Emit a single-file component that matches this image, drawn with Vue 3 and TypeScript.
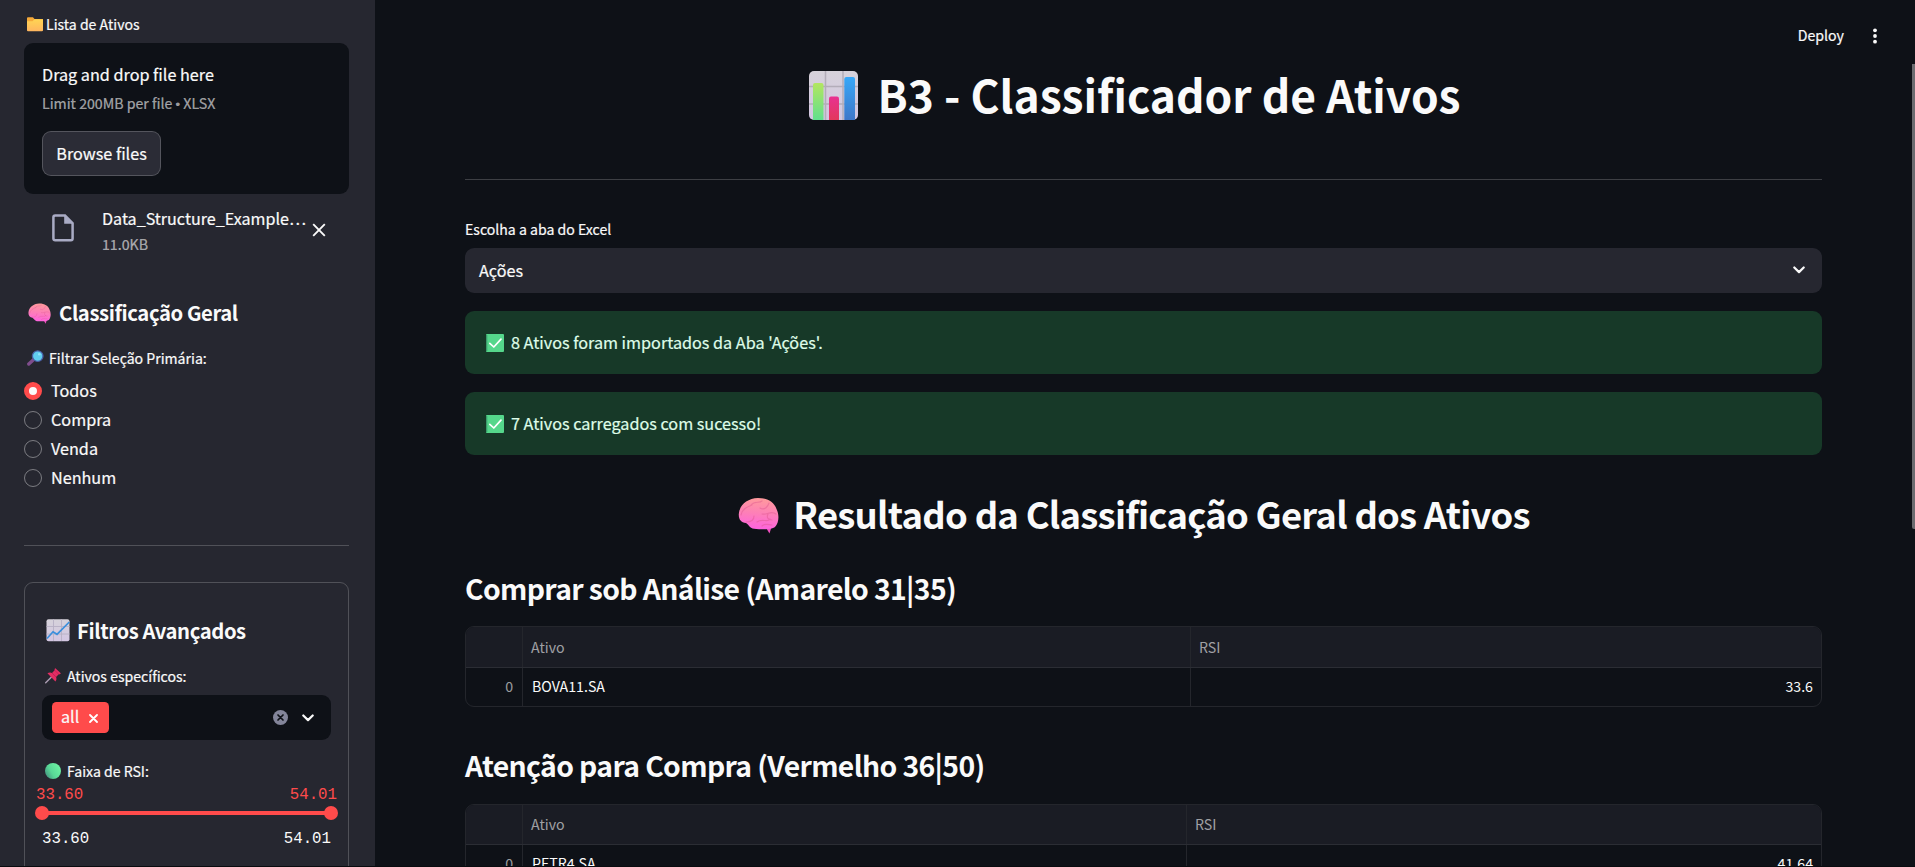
<script setup lang="ts">
import { ref } from 'vue'

interface ResultTable {
  title: string
  split: string
  rows: { index: number; ativo: string; rsi: string }[]
}

const options = ['Todos', 'Compra', 'Venda', 'Nenhum']
const selected = ref('Todos')

const alerts = ["8 Ativos foram importados da Aba 'Ações'.", '7 Ativos carregados com sucesso!']

const tables: ResultTable[] = [
  {
    title: 'Comprar sob Análise (Amarelo 31|35)',
    split: '668px',
    rows: [{ index: 0, ativo: 'BOVA11.SA', rsi: '33.6' }],
  },
  {
    title: 'Atenção para Compra (Vermelho 36|50)',
    split: '664px',
    rows: [{ index: 0, ativo: 'PETR4.SA', rsi: '41.64' }],
  },
]
</script>

<template>
  <div class="app">
    <svg class="defs" width="0" height="0" aria-hidden="true">
      <defs>
        <linearGradient id="brainFill" x1="0.5" y1="0" x2="0.4" y2="1">
          <stop offset="0" stop-color="#ff9a9c" />
          <stop offset="0.5" stop-color="#fd7fb8" />
          <stop offset="1" stop-color="#ff62e0" />
        </linearGradient>
        <linearGradient id="paperFill" x1="0" y1="0" x2="0" y2="1">
          <stop offset="0" stop-color="#d6d2da" />
          <stop offset="1" stop-color="#d3c6e2" />
        </linearGradient>
        <linearGradient id="barGreen" x1="0" y1="0" x2="0" y2="1">
          <stop offset="0" stop-color="#b3e660" />
          <stop offset="1" stop-color="#61df8d" />
        </linearGradient>
        <linearGradient id="barRed" x1="0" y1="0" x2="0" y2="1">
          <stop offset="0" stop-color="#e83191" />
          <stop offset="1" stop-color="#e2385c" />
        </linearGradient>
        <linearGradient id="barBlue" x1="0" y1="0" x2="0" y2="1">
          <stop offset="0" stop-color="#37a8f8" />
          <stop offset="1" stop-color="#3f77c9" />
        </linearGradient>
        <linearGradient id="folderFill" x1="0" y1="0" x2="0" y2="1">
          <stop offset="0" stop-color="#ffd553" />
          <stop offset="1" stop-color="#ffb65f" />
        </linearGradient>
        <linearGradient id="ballFill" x1="1" y1="0.2" x2="0" y2="0.8">
          <stop offset="0" stop-color="#6ff5a4" />
          <stop offset="0.6" stop-color="#58d796" />
          <stop offset="1" stop-color="#43907e" />
        </linearGradient>
        <symbol id="brain" viewBox="0 0 41 37">
          <path d="M27.500 30 L31.500 36.500 L33.500 30z" fill="#f04fc0" />
          <path
            d="M8 26C3 26 .5 22 .8 17C1.500 8 9 1.500 20 1C30 1 36 5 38.500 12C41.500 18 41 26 37 30C34 33 18 32.500 14.500 31.500C11.500 30.500 11 28 8 26z"
            fill="url(#brainFill)"
          />
          <g fill="none" stroke="#de568f" stroke-opacity=".45" stroke-width="1.2" stroke-linecap="round">
            <path d="M3 18C4 12 9 10 14 8M8 25C13 25 16 23 16 19M13 8C17 3 21 7 24 4" />
            <path d="M22 11C27 14 30 9 31 6M24 17C30 18 33 13 38 17M19 25C24 21 30 26 32 22M30 17C28 21 31 23 34 23M24 29C27 26 31 28 34 28" />
          </g>
        </symbol>
        <symbol id="check" viewBox="0 0 18 18">
          <rect width="18" height="18" rx="1" fill="#55d78b" />
          <path d="M0 1v16h1.300V1z" fill="#3b9c6c" />
          <path d="M3.800 9.300l4 3.700 7.200-7.900" fill="none" stroke="#fff" stroke-width="1.700" stroke-linecap="round" stroke-linejoin="round" />
        </symbol>
        <symbol id="chevron" viewBox="0 0 12 8">
          <path d="M1.300 1.500L6 6.100 10.700 1.500" fill="none" stroke="#fafafa" stroke-width="2.200" stroke-linecap="round" stroke-linejoin="round" />
        </symbol>
      </defs>
    </svg>

    <aside class="sidebar">
      <div class="label upload-label">
        <svg width="16" height="15" viewBox="0 0 16 15">
          <path d="M0 1.200Q0 .3 1 .3H6l1.500 1.700H16V6H0z" fill="#f5a93a" />
          <path d="M0 4.200H5.500L7.500 2.200H15.200Q16 2.200 16 3V13.200Q16 14.200 15 14.200H1Q0 14.200 0 13.200z" fill="url(#folderFill)" />
        </svg>
        <span>Lista de Ativos</span>
      </div>

      <section class="uploader">
        <div class="drop-title">Drag and drop file here</div>
        <div class="drop-limit">Limit 200MB per file <span class="bullet">•</span> XLSX</div>
        <button class="browse">Browse files</button>
      </section>

      <div class="file">
        <svg class="file-icon" width="22" height="28" viewBox="0 0 22 28">
          <path d="M3.200 1.500H13L20.600 9.200V24.500Q20.600 26.200 19 26.200H3.200Q1.400 26.200 1.400 24.500V3.200Q1.400 1.500 3.200 1.500z" fill="none" stroke="#a9abc4" stroke-width="2.500" />
          <path d="M12.200 1V9.800H21z" fill="#a9abc4" />
        </svg>
        <div class="file-meta">
          <div class="file-name">Data_Structure_Example…</div>
          <div class="file-size">11.0KB</div>
        </div>
        <svg class="file-x" width="14" height="14" viewBox="0 0 14 14">
          <path d="M1.200 1.200L12.800 12.800M12.800 1.200L1.200 12.800" stroke="#fafafa" stroke-width="1.900" />
        </svg>
      </div>

      <h3 class="side-title general">
        <svg width="23" height="21" viewBox="0 0 41 37" preserveAspectRatio="none"><use href="#brain" width="41" height="37" /></svg>
        <span>Classificação Geral</span>
      </h3>

      <div class="label filter-label">
        <svg width="17" height="16" viewBox="0 0 17 16">
          <path d="M1.800 14L7 9.300" stroke="#7f4d8c" stroke-width="3.400" stroke-linecap="round" />
          <circle cx="10.700" cy="6.100" r="5.300" fill="#60cdf0" stroke="#4a5fa6" stroke-width="1.300" />
          <circle cx="12.300" cy="4.300" r="1.300" fill="#8fe4fb" />
        </svg>
        <span>Filtrar Seleção Primária:</span>
      </div>

      <div class="radios">
        <label v-for="o in options" :key="o" class="radio" @click="selected = o">
          <span class="dot" :class="{ on: selected === o }"></span>
          <span class="radio-text">{{ o }}</span>
        </label>
      </div>

      <div class="side-rule"></div>

      <section class="panel">
        <h3 class="side-title">
          <svg width="24" height="23" viewBox="0 0 24 23">
            <rect x=".5" y=".3" width="23" height="22" rx="2" fill="url(#paperFill)" />
            <path d="M7.500 0V22M15.500 0V22M.5 7.500H23.500M.5 15H23.500" stroke="#b7b0c4" stroke-width=".9" />
            <path d="M1 19.500L7 12.800 11 15.300 23.300 3" fill="none" stroke="#3a8fdc" stroke-width="1.700" />
          </svg>
          <span>Filtros Avançados</span>
        </h3>

        <div class="label pin-label">
          <svg width="16" height="16" viewBox="0 0 16 16">
            <path d="M.7 14.700L6.500 9" stroke="#a99bb0" stroke-width="1.500" stroke-linecap="round" />
            <path d="M2.400 5.300C4.200 4.200 6 4.500 7 5L9.700 2.200C9.400 1.200 9.700 .5 10.400 .2L15.800 5.300C15.500 6.300 14.500 6.500 13.700 6.300L11.100 9C11.700 10.500 11.500 12.400 10.400 13.600z" fill="#e32d62" />
            <path d="M7 5L11.100 9M9.700 2.200L13.700 6.300" stroke="#b8205a" stroke-width=".8" />
          </svg>
          <span>Ativos específicos:</span>
        </div>

        <div class="multi">
          <span class="tag">
            <span class="tag-text">all</span>
            <svg width="9" height="9" viewBox="0 0 9 9"><path d="M1 1L8 8M8 1L1 8" stroke="#fff" stroke-width="1.800" stroke-linecap="round" /></svg>
          </span>
          <svg class="clear" width="15" height="15" viewBox="0 0 15 15">
            <circle cx="7.500" cy="7.500" r="7.500" fill="#83859a" />
            <path d="M5 5L10 10M10 5L5 10" stroke="#0e1117" stroke-width="1.700" stroke-linecap="round" />
          </svg>
          <svg width="12" height="8"><use href="#chevron" width="12" height="8" /></svg>
        </div>

        <div class="label rsi-label">
          <svg width="16" height="16" viewBox="0 0 16 16"><circle cx="8" cy="8" r="8" fill="url(#ballFill)" /></svg>
          <span>Faixa de RSI:</span>
        </div>
        <div class="mono current"><span>33.60</span><span>54.01</span></div>
        <div class="slider">
          <span class="thumb"></span>
          <span class="track"></span>
          <span class="thumb"></span>
        </div>
        <div class="mono limits"><span>33.60</span><span>54.01</span></div>
      </section>
    </aside>

    <main class="main">
      <header class="toolbar">
        <span class="deploy">Deploy</span>
        <svg width="4" height="16" viewBox="0 0 4 16" fill="#fafafa">
          <circle cx="2" cy="2.300" r="1.900" />
          <circle cx="2" cy="8" r="1.900" />
          <circle cx="2" cy="13.700" r="1.900" />
        </svg>
      </header>

      <h1 class="title">
        <svg width="49" height="49" viewBox="0 0 49 49">
          <rect width="49" height="49" rx="5" fill="url(#paperFill)" />
          <path d="M16.500 0V49M34 0V49M0 15.500H49M0 33H49" stroke="#b3adb9" stroke-width="1.500" />
          <path d="M4 49V14Q4 12 6 12H12.500Q14.500 12 14.500 14V49z" fill="url(#barGreen)" />
          <path d="M20 49V27.500Q20 25.500 22 25.500H28Q30 25.500 30 27.500V49z" fill="url(#barRed)" />
          <path d="M35.300 49V8Q35.300 6 37.300 6H44Q46 6 46 8V49z" fill="url(#barBlue)" />
        </svg>
        <span>B3 - Classificador de Ativos</span>
      </h1>

      <div class="main-rule"></div>

      <div class="label sheet-label">Escolha a aba do Excel</div>
      <div class="select">
        <span>Ações</span>
        <svg width="12" height="8"><use href="#chevron" width="12" height="8" /></svg>
      </div>

      <div v-for="a in alerts" :key="a" class="alert">
        <svg width="18" height="18"><use href="#check" width="18" height="18" /></svg>
        <span>{{ a }}</span>
      </div>

      <h2 class="subtitle">
        <svg width="41" height="37"><use href="#brain" width="41" height="37" /></svg>
        <span>Resultado da Classificação Geral dos Ativos</span>
      </h2>

      <section v-for="t in tables" :key="t.title" class="result">
        <h3 class="result-title">{{ t.title }}</h3>
        <div class="table" :style="{ '--split': t.split }">
          <div class="row head">
            <span></span>
            <span>Ativo</span>
            <span>RSI</span>
          </div>
          <div v-for="r in t.rows" :key="r.index" class="row">
            <span class="idx">{{ r.index }}</span>
            <span class="name">{{ r.ativo }}</span>
            <span class="num">{{ r.rsi }}</span>
          </div>
        </div>
      </section>

      <div class="scrollbar"></div>
    </main>
  </div>
</template>

<style>
html,
body {
  background: #0e1117;
  overflow: hidden;
}
</style>

<style scoped>
.app {
  display: flex;
  box-sizing: border-box;
  width: 100%;
  height: 867px;
  overflow: hidden;
  background: #0e1117;
  border-bottom: 1px solid #090b0f;
  color: #fafafa;
  font-family: 'Noto Sans CJK SC', 'Noto Sans', sans-serif;
  font-size: 16.2px;
  -webkit-text-stroke: 0.2px currentColor;
}
.app * {
  box-sizing: border-box;
}
svg {
  display: block;
  flex: none;
}
.defs {
  position: absolute;
}
h1,
h2,
h3 {
  margin: 0;
  font-weight: 700;
  white-space: nowrap;
  -webkit-text-stroke: 0;
}
.label {
  display: flex;
  align-items: center;
  height: 22px;
  line-height: 22px;
  font-size: 14.1px;
  white-space: nowrap;
}

/* Sidebar */
.sidebar {
  flex: none;
  width: 375px;
  padding: 13px 26px 0 24px;
  background: #262730;
}
.upload-label {
  gap: 3px;
  padding-left: 3px;
  margin-bottom: 8px;
}
.uploader {
  height: 151px;
  padding: 18px;
  border-radius: 9px;
  background: #0e1117;
}
.drop-title {
  line-height: 26px;
}
.drop-limit {
  height: 22px;
  margin-top: 5px;
  font-size: 14.18px;
  line-height: 22px;
  color: rgba(250, 250, 250, 0.6);
}
.bullet {
  font-family: 'Liberation Sans', sans-serif;
  font-size: 13px;
  line-height: 1;
}
.browse {
  display: block;
  width: 119px;
  height: 45px;
  margin-top: 17px;
  padding: 0 0 1px;
  border: 1px solid rgba(250, 250, 250, 0.2);
  border-radius: 9px;
  background: #2b2c36;
  color: inherit;
  font: inherit;
  -webkit-text-stroke: inherit;
}
.file {
  display: flex;
  height: 61px;
  padding: 11px 0 0 28px;
}
.file-icon {
  margin-top: 9px;
}
.file-meta {
  margin-left: 28px;
  width: 205px;
}
.file-name {
  line-height: 26px;
  font-size: 16.1px;
  white-space: nowrap;
}
.file-size {
  margin-top: 2px;
  font-size: 14.18px;
  line-height: 22px;
  color: rgba(250, 250, 250, 0.6);
}
.file-x {
  margin: 18px 0 0 5px;
}
.side-title {
  display: flex;
  align-items: center;
  height: 30px;
  gap: 8px;
  font-size: 20.25px;
  line-height: 30px;
  letter-spacing: -0.4px;
}
.side-title span {
  margin-top: 2px;
}
.general {
  margin-top: 42px;
  padding-left: 4px;
}
.general svg {
  margin-top: 2px;
}
.filter-label {
  margin-top: 20px;
  padding-left: 3px;
  gap: 5px;
}
.radios {
  margin-top: 7px;
}
.radio {
  display: flex;
  height: 29px;
}
.dot {
  width: 18px;
  height: 18px;
  margin: 6px 9px 0 0;
  border: 1px solid rgba(250, 250, 250, 0.4);
  border-radius: 50%;
}
.dot.on {
  border: 5.5px solid #ff4b4b;
  background: #fafafa;
}
.radio-text {
  line-height: 29px;
}
.side-rule {
  height: 1px;
  margin-top: 53px;
  background: rgba(250, 250, 250, 0.2);
}
.panel {
  height: 400px;
  margin-top: 36px;
  padding: 32px 17px 0;
  border: 1px solid rgba(250, 250, 250, 0.2);
  border-radius: 9px;
}
.panel .side-title {
  padding-left: 4px;
  gap: 7px;
}
.pin-label {
  margin-top: 20px;
  padding-left: 3px;
  gap: 6px;
}
.multi {
  display: flex;
  align-items: center;
  height: 45px;
  margin-top: 8px;
  padding: 0 17px 0 10px;
  border-radius: 9px;
  background: #0e1117;
}
.tag {
  display: flex;
  align-items: center;
  justify-content: space-between;
  width: 57px;
  height: 31px;
  padding: 0 11px 0 9px;
  border-radius: 4.5px;
  background: #ff4b4b;
  line-height: 28px;
}
.tag-text {
  height: 31px;
}
.tag svg {
  margin-top: 1px;
}
.clear {
  margin: 0 14px 0 auto;
}
.rsi-label {
  margin-top: 20px;
  padding-left: 3px;
  gap: 6px;
}
.mono {
  display: flex;
  justify-content: space-between;
  height: 16px;
  font-family: 'Liberation Mono', monospace;
  font-size: 15.75px;
  line-height: 16px;
  -webkit-text-stroke: 0;
}
.current {
  margin: 5px -6px 0;
  color: #ff4b4b;
}
.slider {
  display: flex;
  align-items: center;
  height: 20px;
  margin: 0 -7px;
}
.thumb {
  width: 14px;
  height: 14px;
  border-radius: 50%;
  background: #ff4b4b;
}
.track {
  flex: 1;
  height: 4px;
  margin: 0 -1px;
  background: #ff4b4b;
}
.limits {
  margin-top: 8px;
}

/* Main area */
.main {
  position: relative;
  flex: 1;
  min-width: 0;
  padding: 63px 93px 0 90px;
}
.toolbar {
  position: absolute;
  top: 25px;
  right: 38px;
  display: flex;
  align-items: center;
  gap: 29px;
  height: 22px;
  font-size: 14.18px;
  line-height: 20px;
}
.deploy {
  margin-top: -2px;
}
.title {
  display: flex;
  align-items: center;
  justify-content: center;
  height: 60px;
  gap: 19px;
  padding-right: 17px;
  font-size: 44.35px;
  line-height: 60px;
}
.title svg {
  margin-top: 5px;
}
.title span {
  margin-top: 2px;
}
.main-rule {
  height: 1px;
  margin-top: 56px;
  background: rgba(250, 250, 250, 0.2);
}
.sheet-label {
  margin-top: 38px;
}
.select {
  display: flex;
  align-items: center;
  justify-content: space-between;
  height: 45px;
  margin-top: 8px;
  padding: 0 17px 1px 14px;
  border-radius: 9px;
  background: #262730;
  line-height: 26px;
}
.select span {
  margin-top: -1px;
}
.alert {
  display: flex;
  align-items: center;
  gap: 7px;
  height: 63px;
  margin-top: 18px;
  padding-left: 21px;
  border-radius: 9px;
  background: #173928;
  color: #dffde9;
  line-height: 61px;
}
.subtitle {
  display: flex;
  align-items: center;
  justify-content: center;
  height: 50px;
  margin-top: 33px;
  gap: 14px;
  padding-right: 19px;
  font-size: 36.45px;
  line-height: 50px;
  letter-spacing: -0.75px;
}
.subtitle svg {
  margin-top: 4px;
}
.result {
  margin-top: 30px;
}
.result + .result {
  margin-top: 38px;
}
.result-title {
  height: 40px;
  font-size: 28.35px;
  line-height: 40px;
  letter-spacing: -0.64px;
}
.table {
  margin-top: 18px;
  border: 1px solid #24262c;
  border-radius: 9px;
  overflow: hidden;
  font-size: 14.18px;
  -webkit-text-stroke: 0;
}
.row {
  display: grid;
  grid-template-columns: 56px var(--split) 1fr;
  height: 38px;
  line-height: 36px;
}
.row > span {
  padding: 0 8px;
}
.row > span + span {
  border-left: 1px solid #24262c;
}
.row.head {
  height: 41px;
  line-height: 40px;
  background: #1a1c24;
  border-bottom: 1px solid #2b2d34;
  color: rgba(250, 250, 250, 0.6);
}
.result + .result .table {
  margin-top: 19px;
}
.result + .result .head {
  height: 40px;
  line-height: 38px;
}
.row .idx {
  padding-right: 9px;
  text-align: right;
  color: rgba(250, 250, 250, 0.6);
}
.row .name {
  padding-left: 9px;
}
.row .num {
  text-align: right;
}
.scrollbar {
  position: absolute;
  top: 64px;
  right: 0;
  width: 3px;
  height: 465px;
  background: #6b6c70;
  border-radius: 0 0 0 2px;
}
</style>
